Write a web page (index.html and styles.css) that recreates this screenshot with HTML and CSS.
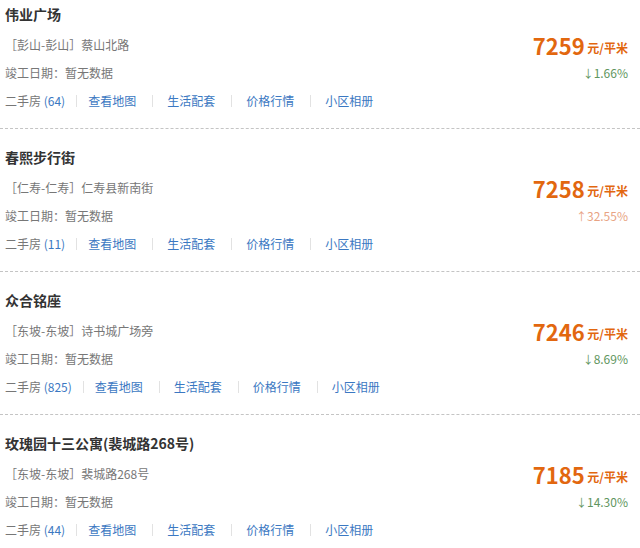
FILE: index.html
```html
<!DOCTYPE html>
<html lang="zh-CN">
<head>
<meta charset="utf-8">
<title>小区列表</title>
<link rel="stylesheet" href="styles.css">
</head>
<body>
<ul class="list">
  <li class="item">
    <div class="info">
      <h3 class="title">伟业广场</h3>
      <p class="addr">［彭山-彭山］蔡山北路</p>
      <p class="date">竣工日期：暂无数据</p>
      <p class="links"><span class="sh">二手房 <a class="cnt">(64)</a></span><a class="lk">查看地图</a><a class="lk">生活配套</a><a class="lk">价格行情</a><a class="lk">小区相册</a></p>
    </div>
    <div class="price">
      <p class="pv"><span class="num">7259</span> <span class="unit">元/平米</span></p>
      <p class="chg down"><span class="arr">↓</span>1.66%</p>
    </div>
  </li>
  <li class="item">
    <div class="info">
      <h3 class="title">春熙步行街</h3>
      <p class="addr">［仁寿-仁寿］仁寿县新南街</p>
      <p class="date">竣工日期：暂无数据</p>
      <p class="links"><span class="sh">二手房 <a class="cnt">(11)</a></span><a class="lk">查看地图</a><a class="lk">生活配套</a><a class="lk">价格行情</a><a class="lk">小区相册</a></p>
    </div>
    <div class="price">
      <p class="pv"><span class="num">7258</span> <span class="unit">元/平米</span></p>
      <p class="chg up"><span class="arr">↑</span>32.55%</p>
    </div>
  </li>
  <li class="item">
    <div class="info">
      <h3 class="title">众合铭座</h3>
      <p class="addr">［东坡-东坡］诗书城广场旁</p>
      <p class="date">竣工日期：暂无数据</p>
      <p class="links"><span class="sh">二手房 <a class="cnt">(825)</a></span><a class="lk">查看地图</a><a class="lk">生活配套</a><a class="lk">价格行情</a><a class="lk">小区相册</a></p>
    </div>
    <div class="price">
      <p class="pv"><span class="num">7246</span> <span class="unit">元/平米</span></p>
      <p class="chg down"><span class="arr">↓</span>8.69%</p>
    </div>
  </li>
  <li class="item">
    <div class="info">
      <h3 class="title">玫瑰园十三公寓(裴城路268号)</h3>
      <p class="addr">［东坡-东坡］裴城路268号</p>
      <p class="date">竣工日期：暂无数据</p>
      <p class="links"><span class="sh">二手房 <a class="cnt">(44)</a></span><a class="lk">查看地图</a><a class="lk">生活配套</a><a class="lk">价格行情</a><a class="lk">小区相册</a></p>
    </div>
    <div class="price">
      <p class="pv"><span class="num">7185</span> <span class="unit">元/平米</span></p>
      <p class="chg down"><span class="arr">↓</span>14.30%</p>
    </div>
  </li>
</ul>
</body>
</html>
```

FILE: styles.css
```css
html, body {
  margin: 0;
  padding: 0;
  background: #fff;
}
body {
  font-family: "Noto Sans CJK SC", "Noto Sans", sans-serif;
  font-size: 12px;
  color: #666;
}
.list {
  list-style: none;
  margin: 0;
  padding: 0;
}
.item {
  display: flex;
  justify-content: space-between;
  align-items: flex-start;
  padding: 18px 12px 13px 5px;
  border-bottom: 1px dashed #c4c4c4;
}
.item:first-child {
  padding-top: 4px;
}
.info {
  display: flex;
  flex-direction: column;
}
.title {
  margin: 0 0 7px;
  font-size: 14px;
  font-weight: bold;
  line-height: 20px;
  color: #333;
}
.addr, .date, .links {
  margin: 0;
  line-height: 28px;
  white-space: nowrap;
}
.addr {
  color: #777;
}
.date {
  color: #777;
}
.links {
  display: flex;
  align-items: center;
}
.sh {
  color: #777;
}
.cnt {
  color: #3b78c2;
}
.lk {
  color: #3b78c2;
  display: flex;
  align-items: center;
}
.lk::before {
  content: "";
  display: inline-block;
  width: 1px;
  height: 12px;
  background: #e2e2e2;
  margin: 0 14px 0 16px;
}
.sh + .lk::before {
  margin: 0 11px 0 11px;
}
.price {
  margin-top: 27px;
  display: flex;
  flex-direction: column;
  align-items: flex-end;
}
.pv {
  margin: 0;
  line-height: 28px;
  height: 28px;
  color: #e2670f;
  font-weight: bold;
  white-space: nowrap;
}
.num {
  font-size: 22px;
  vertical-align: -2px;
}
.unit {
  font-size: 12px;
}
.chg {
  margin: 0;
  line-height: 28px;
}
.arr {
  font-size: 11px;
}
.down {
  color: #5f9660;
}
.up {
  color: #e8a383;
}
```
